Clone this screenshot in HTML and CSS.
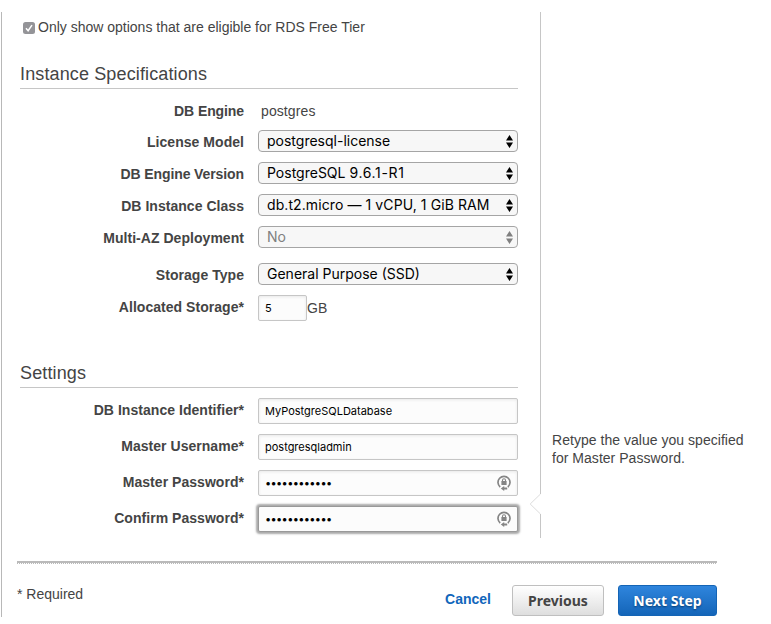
FILE: index.html
```html
<!DOCTYPE html>
<html lang="en">
<head>
<meta charset="utf-8">
<title>Specify DB Details</title>
<link rel="stylesheet" href="styles.css">
</head>
<body>
<svg width="0" height="0" class="defs" aria-hidden="true">
  <symbol id="arrows" viewBox="0 0 7 13"><path d="M3.5 0 7 5.5H0zM3.5 13 7 7.5H0z" fill="currentColor"/></symbol>
  <symbol id="lock" viewBox="0 0 14 16">
    <path d="M3.2 12A6 6 0 1 1 10.8 12" fill="none" stroke="#858585" stroke-width="1.7"/>
    <path d="M3.8 13.5 7.2 10.9v1.6h3v2H7.2v1.5z" fill="#858585"/>
    <path d="M5.5 7V5.2a1.5 1.5 0 0 1 3 0V7" fill="none" stroke="#858585" stroke-width="1.1"/>
    <path d="M4.4 6h5.2v4H4.4z" fill="#858585"/>
  </symbol>
</svg>
<main class="wizard">
  <div class="columns">
    <form class="form">
      <label class="free-tier">
        <svg class="check" viewBox="0 0 12 12"><rect width="12" height="12" rx="2.5" fill="#949498"/><path d="M3 6.3 5.1 8.7 9 3.1" fill="none" stroke="#fff" stroke-width="1.5"/></svg>
        <span>Only show options that are eligible for RDS Free Tier</span>
      </label>
      <h2 class="heading">Instance Specifications</h2>
      <div class="rows specs">
        <div class="row"><span class="label tight">DB Engine</span><span class="value">postgres</span></div>
        <div class="row"><span class="label">License Model</span><div class="select"><span>postgresql-license</span><svg><use href="#arrows"/></svg></div></div>
        <div class="row"><span class="label tight">DB Engine Version</span><div class="select"><span>PostgreSQL <span class="version">9.6.1-R1</span></span><svg><use href="#arrows"/></svg></div></div>
        <div class="row"><span class="label">DB Instance Class</span><div class="select"><span class="instance">db.t2.micro — 1 vCPU, 1 GiB RAM</span><svg><use href="#arrows"/></svg></div></div>
        <div class="row"><span class="label">Multi-AZ Deployment</span><div class="select disabled"><span>No</span><svg><use href="#arrows"/></svg></div></div>
        <div class="row storage"><span class="label">Storage Type</span><div class="select"><span>General Purpose (SSD)</span><svg><use href="#arrows"/></svg></div></div>
        <div class="row"><span class="label raised">Allocated Storage*</span><input class="input short" value="5"><span class="unit">GB</span></div>
      </div>
      <h2 class="heading settings-heading">Settings</h2>
      <div class="rows settings">
        <div class="row"><span class="label raised">DB Instance Identifier*</span><input class="input" value="MyPostgreSQLDatabase"></div>
        <div class="row"><span class="label raised">Master Username*</span><input class="input" value="postgresqladmin"></div>
        <div class="row"><span class="label raised">Master Password*</span><div class="input password"><span class="dots">••••••••••••</span><svg><use href="#lock"/></svg></div></div>
        <div class="row"><span class="label raised">Confirm Password*</span><div class="input password focused"><span class="dots">••••••••••••</span><svg><use href="#lock"/></svg></div></div>
      </div>
    </form>
    <aside class="help">
      <p>Retype the value you specified<br>for Master Password.</p>
      <svg class="pointer" viewBox="0 0 12 20"><path d="M11.5 0v20" stroke="#fff" stroke-width="1"/><path d="M11.5 0 1.2 10l10.3 10" fill="none" stroke="#dcdcdc"/></svg>
    </aside>
  </div>
  <footer class="footer">
    <span class="required">* Required</span>
    <a class="cancel">Cancel</a>
    <button class="button" type="button">Previous</button>
    <button class="button primary" type="button">Next Step</button>
  </footer>
</main>
</body>
</html>
```
FILE: styles.css
```css
* { box-sizing: border-box; }
body {
  margin: 0;
  background: #fff;
  color: #444;
  font: 14px/18px "Liberation Sans", Arial, sans-serif;
}
.defs { position: absolute; }
.wizard {
  margin: 12px 0 0 1px;
  height: 605px;
  border-left: 1px solid #b8b8b8;
}
.columns { display: flex; height: 526px; }
.form { width: 538px; padding: 6px 22px 0 18px; }
.free-tier { display: flex; align-items: center; height: 18px; padding-left: 3px; gap: 3px; }
.check { width: 12px; height: 12px; margin-top: 2px; }
.heading {
  height: 25px;
  margin: 28px 0 0;
  border-bottom: 1px solid #c6c6c6;
  font-size: 18px;
  line-height: 20px;
  font-weight: normal;
  letter-spacing: .13px;
}
.settings-heading { margin-top: 42px; }
.rows { display: flex; flex-direction: column; }
.specs { gap: 10px; padding-top: 9px; }
.specs .row:first-child { margin: 4px 0 0; height: 18px; }
.settings { gap: 10px; padding-top: 10px; }
.row { display: flex; align-items: center; }
.storage { margin-top: 5px; }
.label { width: 224px; margin-right: 14px; padding-top: 1px; text-align: right; font-weight: bold; letter-spacing: .04px; }
.tight { letter-spacing: -.1px; }
.specs .row:first-child .label { padding-top: 0; }
.raised { padding: 0 0 2px; }
.value { padding-left: 3px; letter-spacing: .1px; }
.select {
  display: flex;
  align-items: center;
  justify-content: space-between;
  width: 260px;
  height: 22px;
  padding: 0 4px 0 8px;
  border: 1px solid #a5a5a5;
  border-radius: 4px;
  background: #f7f7f7;
  color: #000;
  font-family: Inter, sans-serif;
  white-space: nowrap;
}
.version { letter-spacing: .65px; }
.instance { letter-spacing: .09px; }
.select svg { width: 7px; height: 13px; }
.disabled { color: #808080; }
.input {
  width: 260px;
  height: 26px;
  padding: 0 6px;
  border: 1px solid #c6c6c6;
  border-radius: 2px;
  background: #fcfcfc;
  box-shadow: inset 0 1px 3px #e8e8e8;
  color: #000;
  font: 11px/24px Inter, sans-serif;
}
.short { width: 49px; }
.password { display: flex; align-items: center; justify-content: space-between; }
.password svg { width: 14px; height: 16px; }
.dots { letter-spacing: -.65px; }
.focused { border-color: #999; box-shadow: 0 0 2px 2px #aaa; }
.help { position: relative; width: 231px; border-left: 1px solid #c6c6c6; }
.help p { margin: 419px 0 0 11px; white-space: nowrap; letter-spacing: .03px; }
.pointer { position: absolute; left: -12px; top: 482px; width: 12px; height: 20px; }
.footer {
  display: flex;
  align-items: flex-start;
  width: 700px;
  margin: 23px 0 0 15px;
  padding-top: 22px;
  border-top: 2px solid #bababa;
  background: repeating-linear-gradient(90deg, #bababa 0 1px, #fff 1px 2px) top / 100% 1px no-repeat;
}
.required { margin-right: auto; }
.cancel { margin: 5px 21px 0 0; color: #1166bb; font-weight: bold; }
.button {
  width: 92px;
  height: 31px;
  margin-right: 14px;
  padding: 0;
  border: 1px solid #bfbfbf;
  border-radius: 3px;
  background: linear-gradient(#fff, #dedede);
  color: #444;
  font: bold 14px "Noto Sans", sans-serif;
}
.primary {
  width: 99px;
  margin-right: 0;
  border-color: #1464b5;
  background: linear-gradient(#2f85dd, #1465b8);
  color: #fff;
  text-shadow: 0 1px 2px #063a70;
}
```
